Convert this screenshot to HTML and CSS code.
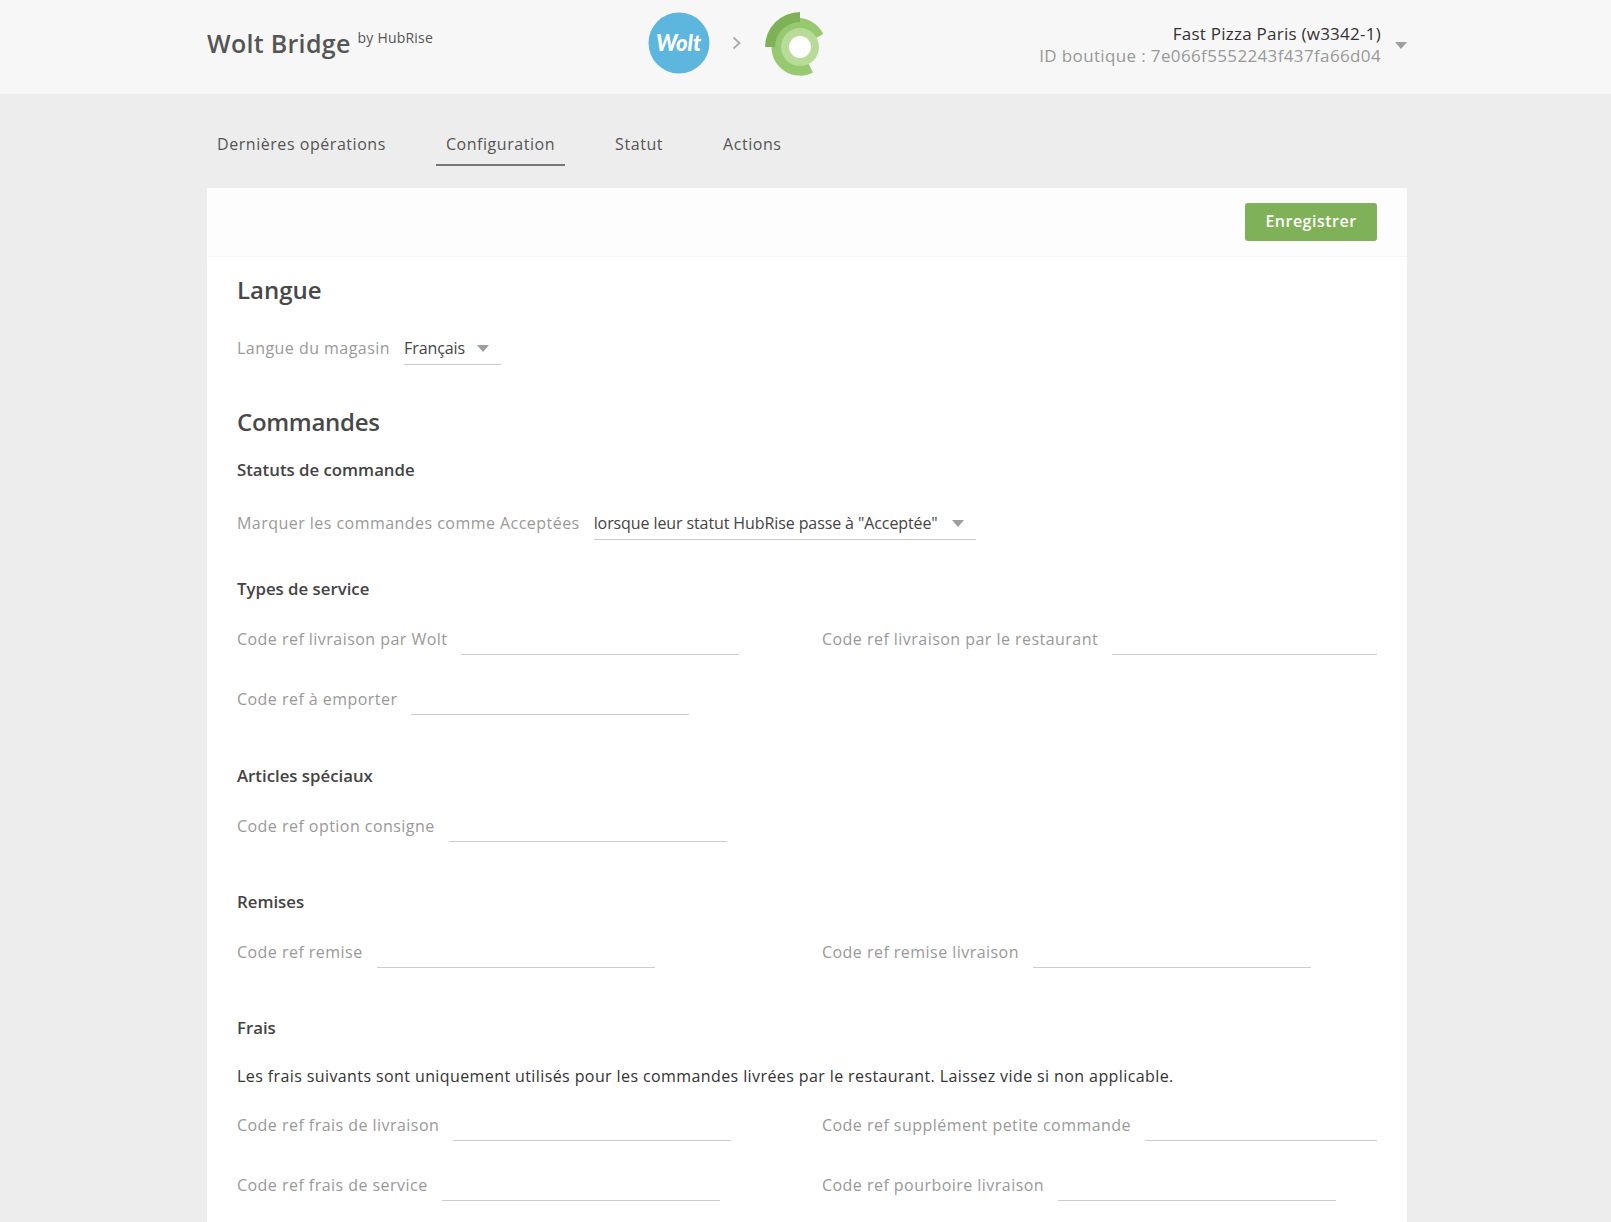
FILE: index.html
```html
<!DOCTYPE html>
<html lang="fr">
<head>
<meta charset="utf-8">
<title>Wolt Bridge</title>
<link rel="stylesheet" href="styles.css">
</head>
<body>
<header class="topbar">
  <div class="wrap topbar-inner">
    <div class="brand"><span class="brand-name">Wolt Bridge</span><span class="brand-by">by HubRise</span></div>
    <div class="logos">
      <svg class="logo" width="62" height="62" viewBox="0 0 62 62"><circle cx="31" cy="31" r="30.5" fill="#5cb6dd"/><text x="30.5" y="39" text-anchor="middle" class="wolt-text">Wolt</text></svg>
      <svg class="chevron" width="10" height="14" viewBox="0 0 10 14"><path d="M1.5 1.5 L7.5 7 L1.5 12.5" fill="none" stroke="#aaa" stroke-width="1.8"/></svg>
      <svg class="logo logo-hub" width="62" height="66" viewBox="0 0 62 66">
        <path d="M35 1 A35 35 0 0 0 0 36 L12 36 A23 23 0 0 1 35 13 Z" fill="#7fb158"/>
        <path d="M48 61.5 A28.5 28.5 0 0 1 6.5 36 L10 36 A25 25 0 0 1 35 11 L35 7 A29 29 0 0 1 58.3 23 L35 36 Z" fill="#97c970"/>
        <circle cx="35" cy="36" r="19" fill="#b6dc97"/>
        <circle cx="35" cy="36" r="11" fill="#fff"/>
      </svg>
    </div>
    <div class="account">
      <div class="account-text">
        <div class="account-name">Fast Pizza Paris (w3342-1)</div>
        <div class="account-id">ID boutique : 7e066f5552243f437fa66d04</div>
      </div>
      <span class="caret"></span>
    </div>
  </div>
</header>

<nav class="wrap tabs">
  <a class="tab">Dernières opérations</a>
  <a class="tab active">Configuration</a>
  <a class="tab">Statut</a>
  <a class="tab">Actions</a>
</nav>

<main class="wrap card">
  <div class="toolbar"><button class="btn">Enregistrer</button></div>
  <div class="content">
    <h2 class="h-lang">Langue</h2>
    <div class="row row-lang">
      <label class="field"><span class="lbl">Langue du magasin</span><span class="select select-lang"><span>Français</span><span class="caret"></span></span></label>
    </div>

    <h2 class="h-cmd">Commandes</h2>
    <h3 class="h-first">Statuts de commande</h3>
    <div class="row row-status">
      <label class="field"><span class="lbl">Marquer les commandes comme Acceptées</span><span class="select select-status"><span>lorsque leur statut HubRise passe à "Acceptée"</span><span class="caret"></span></span></label>
    </div>

    <h3 class="h-sub">Types de service</h3>
    <div class="grid">
      <label class="field"><span class="lbl">Code ref livraison par Wolt</span><input class="inp"></label>
      <label class="field"><span class="lbl">Code ref livraison par le restaurant</span><input class="inp"></label>
      <label class="field"><span class="lbl">Code ref à emporter</span><input class="inp"></label>
    </div>

    <h3 class="h-sub h-gap">Articles spéciaux</h3>
    <div class="grid">
      <label class="field"><span class="lbl">Code ref option consigne</span><input class="inp"></label>
    </div>

    <h3 class="h-sub h-near">Remises</h3>
    <div class="grid">
      <label class="field"><span class="lbl">Code ref remise</span><input class="inp"></label>
      <label class="field"><span class="lbl">Code ref remise livraison</span><input class="inp"></label>
    </div>

    <h3 class="h-sub h-near h-note">Frais</h3>
    <p class="note">Les frais suivants sont uniquement utilisés pour les commandes livrées par le restaurant. Laissez vide si non applicable.</p>
    <div class="grid">
      <label class="field"><span class="lbl">Code ref frais de livraison</span><input class="inp"></label>
      <label class="field"><span class="lbl">Code ref supplément petite commande</span><input class="inp"></label>
      <label class="field"><span class="lbl">Code ref frais de service</span><input class="inp"></label>
      <label class="field"><span class="lbl">Code ref pourboire livraison</span><input class="inp"></label>
    </div>
  </div>
</main>
</body>
</html>
```
FILE: styles.css
```css
* { box-sizing: border-box; }
html, body { margin: 0; padding: 0; }
body {
  background: #ededed;
  color: #444;
  font-family: "Open Sans", "Noto Sans", sans-serif;
  font-size: 16px;
  line-height: 24px;
  letter-spacing: 0.4px;
  overflow-x: hidden;
}
.wrap { width: 1200px; margin-left: 207px; }

.topbar { background: #f7f7f7; height: 94px; }
.topbar-inner { height: 94px; display: flex; align-items: center; position: relative; }
.brand { display: flex; align-items: flex-start; gap: 7px; width: 441px; padding-bottom: 8px; letter-spacing: 0; }
.brand-name { font-size: 25px; line-height: 34px; font-weight: 600; color: #555; letter-spacing: 0.3px; }
.brand-by { font-size: 14px; line-height: 18px; color: #555; margin-top: 3px; letter-spacing: 0.2px; }
.logos { display: flex; align-items: flex-start; gap: 22px; align-self: flex-start; padding-top: 12px; }
.logo-hub { margin-top: -1px; }
.chevron { margin-top: 24px; margin-right: 1px; }
.wolt-text { font-family: "Lato", sans-serif; font-style: italic; font-weight: 900; font-size: 22px; fill: #fff; letter-spacing: 0; }
.account { display: flex; align-items: center; gap: 14px; margin-left: auto; margin-bottom: 4px; }
.account-text { text-align: right; line-height: 22px; }
.account-name { font-size: 17px; color: #333; letter-spacing: 0.25px; }
.account-id { font-size: 17px; color: #999; letter-spacing: 0.36px; }
.caret { display: inline-block; width: 0; height: 0; border-left: 6px solid transparent; border-right: 6px solid transparent; border-top: 7px solid #a09ca0; }

.tabs { height: 94px; display: flex; align-items: flex-start; padding-top: 32px; gap: 40px; }
.tab { display: block; height: 40px; line-height: 36px; padding: 0 10px; color: #555; font-size: 16px; letter-spacing: 0.55px; }
.tab.active { border-bottom: 2px solid #777; }

.card { background: #fff; }
.toolbar { height: 69px; background: #fdfdfd; border-bottom: 1px solid #f5f5f5; display: flex; justify-content: flex-end; align-items: flex-start; padding: 15px 30px 0; }
.btn { width: 132px; height: 38px; border: 0; border-radius: 3px; background: #7fb158; color: #fff; font: 600 16px "Open Sans", sans-serif; letter-spacing: 0.5px; padding: 0 0 2px; }
.content { padding: 0 30px 60px; }

h2 { margin: 0; font-size: 24px; line-height: 32px; font-weight: 600; color: #484848; letter-spacing: 0; }
h3 { margin: 0; font-size: 16.8px; line-height: 24px; font-weight: 600; color: #444; letter-spacing: 0; }
.h-lang { padding-top: 17px; }
.row-lang { margin-top: 29px; }
.h-cmd { margin-top: 35px; letter-spacing: -0.3px; }
.h-first { margin-top: 20px; }
.row-status { margin-top: 28px; }
.h-sub { margin-top: 31px; margin-bottom: 25px; }
.h-gap { margin-top: 42px; }
.h-near { margin-top: 41px; }
.h-note { margin-bottom: 24px; }
.note { margin: 0 0 24px; color: #333; font-size: 16px; line-height: 24px; }

.field { display: flex; align-items: flex-start; gap: 14px; height: 36px; }
.lbl { color: #999; line-height: 26px; white-space: nowrap; letter-spacing: 0.46px; }
.select { display: flex; align-items: center; justify-content: space-between; height: 30px; border-bottom: 1px solid #ccc; line-height: 26px; padding-bottom: 3px; white-space: nowrap; color: #444; letter-spacing: -0.1px; }
.select-lang { width: 97px; padding-right: 12px; }
.select-status { width: 382px; padding-right: 12px; }
.inp { flex: 0 1 278px; min-width: 0; height: 29px; border: 0; border-bottom: 1px solid #ccc; background: transparent; outline: none; }
.grid { display: grid; grid-template-columns: 555px 555px; column-gap: 30px; row-gap: 24px; }
```
